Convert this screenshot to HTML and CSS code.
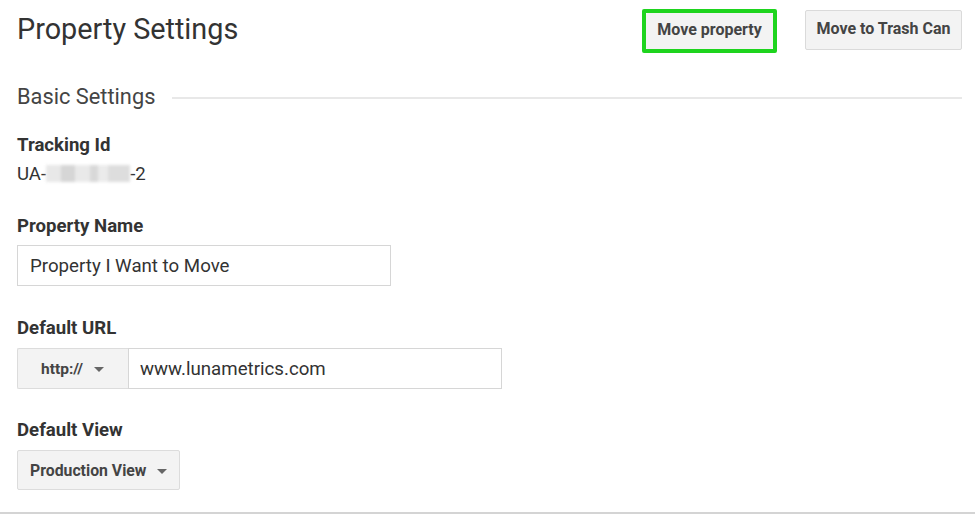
FILE: index.html
```html
<!DOCTYPE html>
<html>
<head>
<meta charset="utf-8">
<link rel="stylesheet" href="styles.css">
</head>
<body>
<div class="page">
  <header class="header">
    <h1 class="title">Property Settings</h1>
    <div class="actions">
      <div class="highlight"><button class="btn btn-move">Move property</button></div>
      <button class="btn btn-trash">Move to Trash Can</button>
    </div>
  </header>

  <div class="section-head">
    <h2 class="section-title">Basic Settings</h2>
    <div class="section-rule"></div>
  </div>

  <div class="field field-tracking">
    <div class="label">Tracking Id</div>
    <div class="value">UA-<span class="blur"></span>-2</div>
  </div>

  <div class="field field-name">
    <div class="label">Property Name</div>
    <div class="input input-name">Property I Want to Move</div>
  </div>

  <div class="field field-url">
    <div class="label">Default URL</div>
    <div class="url-row">
      <div class="select select-proto">http://<span class="caret"></span></div>
      <div class="input input-url">www.lunametrics.com</div>
    </div>
  </div>

  <div class="field field-view">
    <div class="label">Default View</div>
    <div class="select select-view">Production View<span class="caret"></span></div>
  </div>
</div>
</body>
</html>
```

FILE: styles.css
```css
* { box-sizing: border-box; }
html, body { margin: 0; padding: 0; background: #fff; }
body { font-family: Roboto, "Noto Sans", Arial, sans-serif; color: #333; }

.page {
  height: 514px;
  padding: 0 13px 0 17px;
  border-bottom: 2px solid #d4d4d4;
  overflow: hidden;
}

.header {
  display: flex;
  justify-content: space-between;
  align-items: flex-start;
  padding-top: 9px;
}
.title {
  margin: 3px 0 0 0;
  font-size: 28.8px;
  font-weight: 400;
  line-height: 34px;
  color: #333;
}
.actions { display: flex; align-items: flex-start; gap: 28px; }

.btn {
  font-family: Roboto, "Noto Sans", Arial, sans-serif;
  font-weight: 700;
  font-size: 16px;
  color: #444;
  background: #f3f3f3;
  border: 1px solid #dadada;
  border-radius: 2px;
  cursor: pointer;
}
.highlight {
  border: 4px solid #1ed41e;
  border-radius: 2px;
  width: 135px;
  height: 44px;
}
.btn-move {
  display: block;
  width: 100%;
  height: 100%;
  border: none;
  padding: 0 0 3px 0;
}
.btn-trash {
  margin-top: 1px;
  width: 157px;
  height: 40px;
  padding: 0 0 3px 0;
}

.section-head {
  display: flex;
  align-items: center;
  margin-top: 32px;
  height: 24px;
}
.section-title {
  margin: 0;
  font-size: 21.8px;
  font-weight: 400;
  line-height: 24px;
  color: #444;
}
.section-rule {
  flex: 1;
  height: 2px;
  background: #e8e8e8;
  margin-left: 17px;
  margin-top: 1px;
}

.label {
  font-size: 18.6px;
  font-weight: 700;
  line-height: 21px;
  color: #333;
}
.value {
  font-size: 18.6px;
  line-height: 21px;
  color: #333;
  margin-top: 8px;
}
.blur {
  display: inline-block;
  vertical-align: -2px;
  width: 84px;
  height: 17px;
  background:
    linear-gradient(90deg, #e4e4e4 0 18%, #cfcfcf 18% 34%, #e6e6e6 34% 52%, #d2d2d2 52% 62%, #e8e8e8 62% 74%, #d8d8d8 74% 100%);
  filter: blur(1.5px);
  opacity: 0.85;
}

.field-tracking { margin-top: 26px; }
.field-name { margin-top: 31px; }
.field-url { margin-top: 32px; }
.field-view { margin-top: 31px; }

.input {
  border: 1px solid #d6d6d6;
  background: #fff;
  font-size: 18.7px;
  color: #333;
  display: flex;
  align-items: center;
  padding-left: 12px;
  height: 41px;
}
.input-name { width: 374px; margin-top: 8px; }

.url-row { display: flex; margin-top: 9px; }
.select {
  display: flex;
  align-items: center;
  background: #f3f3f3;
  border: 1px solid #dcdcdc;
  border-radius: 2px;
  font-weight: 700;
  color: #444;
  height: 41px;
}
.select-proto {
  width: 111px;
  font-size: 15.5px;
  padding-left: 23px;
  border-radius: 2px 0 0 2px;
  border-right: none;
}
.input-url { width: 374px; padding-left: 11px; }
.select-view {
  width: 163px;
  margin-top: 9px;
  font-size: 15.8px;
  padding-left: 12px;
  height: 40px;
}
.caret {
  width: 0;
  height: 0;
  border-left: 5px solid transparent;
  border-right: 5px solid transparent;
  border-top: 5px solid #666;
  margin-left: 11px;
  margin-top: 2px;
}
```
